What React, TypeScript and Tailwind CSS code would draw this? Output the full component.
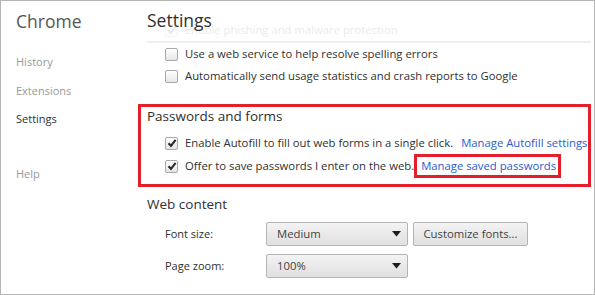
import React from "react";

const font = { fontFamily: '"Open Sans", "Noto Sans", sans-serif' };

function Check({ checked }: { checked?: boolean }) {
  return (
    <span className="flex h-[13px] w-[13px] shrink-0 items-center justify-center rounded-[2px] border border-[#a9a9a9] bg-gradient-to-b from-white to-[#e6e6e6]">
      {checked && (
        <svg width="10" height="10" viewBox="0 0 10 10">
          <path d="M1.5 5.2 L4 7.8 L8.6 1.8" fill="none" stroke="#2a2a2a" strokeWidth="2.1" />
        </svg>
      )}
    </span>
  );
}

function Row({ checked, children }: { checked?: boolean; children: React.ReactNode }) {
  return (
    <div className="flex h-[22px] items-center whitespace-nowrap pl-[18px]">
      <Check checked={checked} />
      <span className="ml-[7px] flex items-center">{children}</span>
    </div>
  );
}

function Select({ value }: { value: string }) {
  return (
    <div className="flex h-[24px] w-[142px] items-center justify-between rounded-[2px] border border-[#b4b4b4] bg-gradient-to-b from-[#f3f3f3] to-[#e0e0e0] pl-[10px] pr-[6px] text-[#444]">
      <span>{value}</span>
      <svg width="9" height="6" viewBox="0 0 9 6">
        <path d="M0 0 H9 L4.5 5.5 Z" fill="#1e1e1e" />
      </svg>
    </div>
  );
}

export default function App() {
  return (
    <div
      style={font}
      className="flex h-[295px] w-[595px] overflow-hidden border border-[#b5b5b5] bg-white text-[11.3px] text-[#303030]"
    >
      {/* left nav */}
      <div className="w-[136px] shrink-0 pl-[15px] text-[11px]">
        <div className="mt-[7px] h-[26px] text-[17.5px] leading-[26px] text-[#555]">Chrome</div>
        <div className="mt-[19px] h-[18px] leading-[18px] text-[#999]">History</div>
        <div className="mt-[11px] h-[18px] leading-[18px] text-[#999]">Extensions</div>
        <div className="mt-[10px] h-[18px] leading-[18px] text-[#303030]">Settings</div>
        <div className="mt-[37px] h-[18px] leading-[18px] text-[#999]">Help</div>
      </div>

      {/* main */}
      <div className="flex-1 pr-[5px]">
        <div className="ml-[10px] grid h-[42px] border-b-2 border-[#efefef]">
          <div className="flex items-center whitespace-nowrap pl-[18px] pt-[18px] opacity-10 [grid-area:1/1]">
            <Check checked />
            <span className="ml-[7px]">Enable phishing and malware protection</span>
          </div>
          <div className="pt-[7px] text-[17.5px] leading-[24px] text-[#303030] [grid-area:1/1]">Settings</div>
        </div>
        <div className="ml-[10px]">
          <Row>Use a web service to help resolve spelling errors</Row>
          <Row>Automatically send usage statistics and crash reports to Google</Row>
        </div>

        <div className="ml-px mt-[17px] h-[83px] overflow-hidden border-[3px] border-[#e41f2b] pl-[6px]">
          <div className="h-[18px] text-[13.5px] leading-[18px]">Passwords and forms</div>
          <div className="mt-[7px]">
            <Row checked>
              Enable Autofill to fill out web forms in a single click.
              <span className="ml-[8px] text-[#2a5bd0]">Manage Autofill settings</span>
            </Row>
          </div>
          <div className="mt-px">
            <Row checked>
              Offer to save passwords I enter on the web.
              <span className="-my-px ml-0 flex h-[24px] items-center border-[3px] border-[#e41f2b] pl-[4px] pr-[2px] text-[#2a5bd0]">
                Manage saved passwords
              </span>
            </Row>
          </div>
        </div>

        <div className="ml-[10px]">
          <div className="mt-[8px] h-[18px] text-[13.5px] leading-[18px]">Web content</div>
          <div className="mt-[9px] flex h-[24px] items-center pl-[18px]">
            <span className="w-[101px] text-[11px]">Font size:</span>
            <Select value="Medium" />
            <div className="ml-[5px] flex h-[24px] w-[115px] items-center justify-center rounded-[2px] border border-[#b4b4b4] bg-gradient-to-b from-[#f3f3f3] to-[#e0e0e0] text-[#444]">
              Customize fonts...
            </div>
          </div>
          <div className="mt-[8px] flex h-[24px] items-center pl-[18px]">
            <span className="w-[101px] text-[11px]">Page zoom:</span>
            <Select value="100%" />
          </div>
        </div>
      </div>
    </div>
  );
}
